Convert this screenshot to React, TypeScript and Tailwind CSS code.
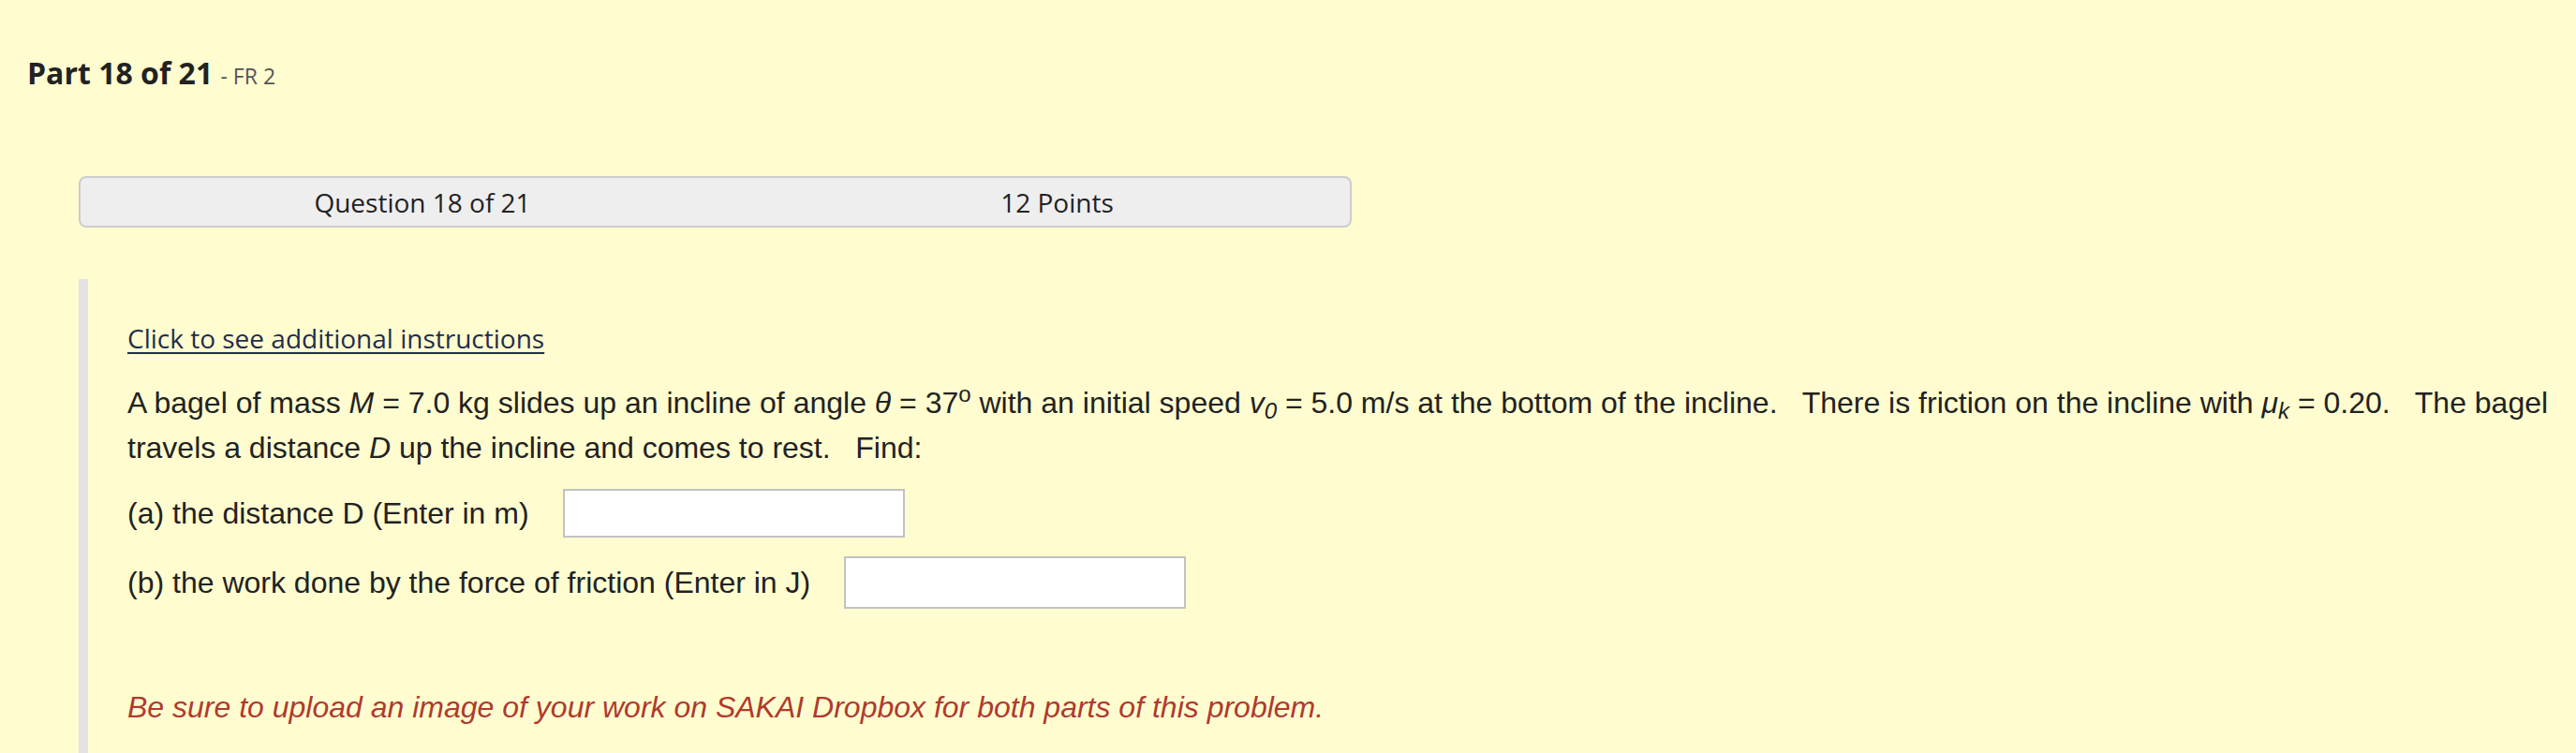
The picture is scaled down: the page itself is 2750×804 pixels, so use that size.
import React from 'react';

const sans = "font-['Open_Sans',sans-serif]";
const arial = "font-['Liberation_Sans',Arial,sans-serif]";

function AnswerRow({ label, height }: { label: string; height: string }) {
  return (
    <div className="flex items-center gap-[36px]">
      <span className="text-[32px] leading-[48px]">{label}</span>
      <input
        type="text"
        className={`w-[365px] ${height} border-2 border-[#c2c2c2] bg-white outline-none`}
      />
    </div>
  );
}

export default function App() {
  return (
    <div className="h-screen overflow-hidden bg-[#fffdd0] text-[#222]">
      <h2 className={`${sans} pl-[29px] pt-[58px] text-[32px] font-bold leading-[40px] text-[#222]`}>
        Part 18 of 21{' '}
        <span className="text-[23px] font-normal text-[#555]">- FR 2</span>
      </h2>

      <div
        className={`${sans} ml-[84px] mt-[87px] grid h-[55px] w-[1359px] grid-cols-[730px_1fr] items-center rounded-[8px] border-2 border-[#cccccc] bg-[#eeeeee] text-[28px] leading-[38px]`}
      >
        <div className="text-center">Question 18 of 21</div>
        <div className="text-center">12 Points</div>
      </div>

      <div className="ml-[84px] mt-[55px] border-l-[10px] border-[#e3e3e3] pl-[42px] pr-[10px] pt-[43px] pb-[60px]">
        <a href="#" className={`${sans} text-[28px] leading-[40px] text-[#1f2d4d] underline underline-offset-[4px]`}>
          Click to see additional instructions
        </a>

        <div className={`${arial} mt-[25px] text-[32px]`}>
          <p className="leading-[48px]">
            A bagel of mass <i>M</i> = 7.0 kg slides up an incline of angle <i>θ</i> = 37<sup>o</sup> with an
            initial speed <i>v</i>
            <sub>
              <i>0</i>
            </sub>{' '}
            = 5.0 m/s at the bottom of the incline.&nbsp;&nbsp; There is friction on the incline with{' '}
            <i>μ</i>
            <sub>
              <i>k</i>
            </sub>{' '}
            = 0.20.&nbsp;&nbsp; The bagel travels a distance <i>D</i> up the incline and comes to rest.&nbsp;&nbsp;
            Find:
          </p>

          <div className="mt-[20px]">
            <AnswerRow label="(a) the distance D (Enter in m)" height="h-[52px]" />
          </div>
          <div className="mt-[20px]">
            <AnswerRow label="(b) the work done by the force of friction (Enter in J)" height="h-[56px]" />
          </div>

          <p className="mt-[81px] leading-[48px] italic text-[#b03a2e]">
            Be sure to upload an image of your work on SAKAI Dropbox for both parts of this problem.
          </p>
        </div>
      </div>
    </div>
  );
}
